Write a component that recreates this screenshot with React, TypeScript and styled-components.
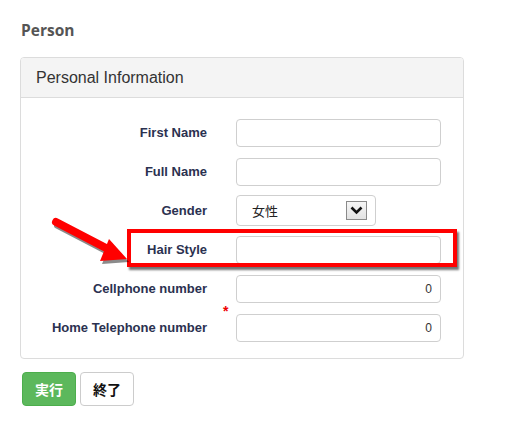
import React from 'react';
import styled, { createGlobalStyle } from 'styled-components';

const GlobalStyle = createGlobalStyle`
  html, body {
    margin: 0;
    padding: 0;
    background: #fff;
  }
  body {
    font-family: "Liberation Sans", Arial, sans-serif;
  }
`;

const Page = styled.div`
  position: relative;
  width: 505px;
  height: 425px;
  padding: 19px 0 0 20px;
  box-sizing: border-box;
`;

const Title = styled.h3`
  margin: 0 0 16px 1px;
  font-family: "Open Sans", "Liberation Sans", sans-serif;
  font-size: 15.5px;
  font-weight: 700;
  line-height: 22px;
  color: #555;
`;

const Panel = styled.div`
  width: 444px;
  border: 1px solid #dcdcdc;
  border-radius: 4px;
  box-sizing: border-box;
  overflow: hidden;
`;

const PanelHeader = styled.div`
  height: 39px;
  padding: 0 15px;
  display: flex;
  align-items: center;
  background: #f4f4f4;
  border-bottom: 1px solid #dcdcdc;
  font-size: 16px;
  color: #333;
`;

const PanelBody = styled.div`
  padding: 15px 0 11px;
`;

const Row = styled.div`
  position: relative;
  height: 39px;
  display: grid;
  grid-template-columns: 186px 205px;
  column-gap: 29px;
  align-items: center;
`;

const Label = styled.label`
  text-align: right;
  font-size: 13px;
  font-weight: 700;
  color: #2b3150;
`;

const Required = styled.span`
  position: absolute;
  left: 202px;
  top: -5px;
  color: #e00;
  font-size: 14px;
  font-weight: 700;
`;

const TextInput = styled.input<{ $numeric?: boolean }>`
  width: 205px;
  height: 28px;
  box-sizing: border-box;
  border: 1px solid #cfcfcf;
  border-radius: 4px;
  padding: 0 8px;
  font-family: "Liberation Sans", Arial, sans-serif;
  font-size: 12px;
  color: #333;
  text-align: ${(p) => (p.$numeric ? 'right' : 'left')};
  outline: none;
`;

const Select = styled.div`
  width: 140px;
  height: 31px;
  box-sizing: border-box;
  border: 1px solid #cfcfcf;
  border-radius: 4px;
  display: flex;
  align-items: center;
  justify-content: space-between;
  padding: 0 8px 0 15px;
  font-family: "Noto Sans CJK JP", sans-serif;
  font-size: 13px;
  color: #222;
`;

const SelectArrow = styled.span`
  width: 21px;
  height: 19px;
  box-sizing: border-box;
  border: 1px solid #8a8a8a;
  background: linear-gradient(#f6f6f6, #e2e2e2);
  display: flex;
  align-items: center;
  justify-content: center;
`;

const Actions = styled.div`
  display: flex;
  gap: 4px;
  margin: 13px 0 0 2px;
`;

const Button = styled.button<{ $primary?: boolean }>`
  width: 54px;
  height: 34px;
  box-sizing: border-box;
  border-radius: 4px;
  border: 1px solid ${(p) => (p.$primary ? '#4cae4c' : '#ccc')};
  background: ${(p) => (p.$primary ? '#5cb85c' : '#fff')};
  color: ${(p) => (p.$primary ? '#fff' : '#111')};
  font-family: "Noto Sans CJK JP", sans-serif;
  font-size: 14px;
  font-weight: 700;
  padding: 0;
`;

const Highlight = styled.div`
  position: absolute;
  left: 127px;
  top: 229px;
  width: 330px;
  height: 38px;
  box-sizing: border-box;
  border: 4px solid #f00;
  box-shadow: 2px 3px 2px rgba(0, 0, 0, 0.55);
  pointer-events: none;
`;

const Arrow = styled.svg`
  position: absolute;
  left: 44px;
  top: 212px;
  overflow: visible;
  pointer-events: none;
`;

const fields = [
  { label: 'First Name' },
  { label: 'Full Name' },
];

const App: React.FC = () => {
  return (
    <>
      <GlobalStyle />
      <Page>
        <Title>Person</Title>
        <Panel>
          <PanelHeader>Personal Information</PanelHeader>
          <PanelBody>
            {fields.map((f) => (
              <Row key={f.label}>
                <Label>{f.label}</Label>
                <TextInput />
              </Row>
            ))}
            <Row>
              <Label>Gender</Label>
              <Select>
                <span>女性</span>
                <SelectArrow>
                  <svg width="13" height="9" viewBox="0 0 13 9">
                    <path d="M1.5 1.5 L6.5 6.5 L11.5 1.5" fill="none" stroke="#111" strokeWidth="2.6" />
                  </svg>
                </SelectArrow>
              </Select>
            </Row>
            <Row>
              <Label>Hair Style</Label>
              <TextInput />
            </Row>
            <Row>
              <Label>Cellphone number</Label>
              <TextInput $numeric defaultValue="0" />
            </Row>
            <Row>
              <Label>Home Telephone number</Label>
              <Required>*</Required>
              <TextInput $numeric defaultValue="0" />
            </Row>
          </PanelBody>
        </Panel>
        <Actions>
          <Button $primary>実行</Button>
          <Button>終了</Button>
        </Actions>
        <Highlight />
        <Arrow width="90" height="60" viewBox="0 0 90 60">
          <g transform="translate(2 3)" opacity="0.45">
            <line x1="12" y1="10" x2="62" y2="36" stroke="#000" strokeWidth="8" strokeLinecap="round" />
            <polygon points="83,47 56,49 65,27" fill="#000" />
          </g>
          <line x1="12" y1="10" x2="62" y2="36" stroke="#f00" strokeWidth="8" strokeLinecap="round" />
          <polygon points="83,47 56,49 65,27" fill="#f00" />
        </Arrow>
      </Page>
    </>
  );
};

export default App;
